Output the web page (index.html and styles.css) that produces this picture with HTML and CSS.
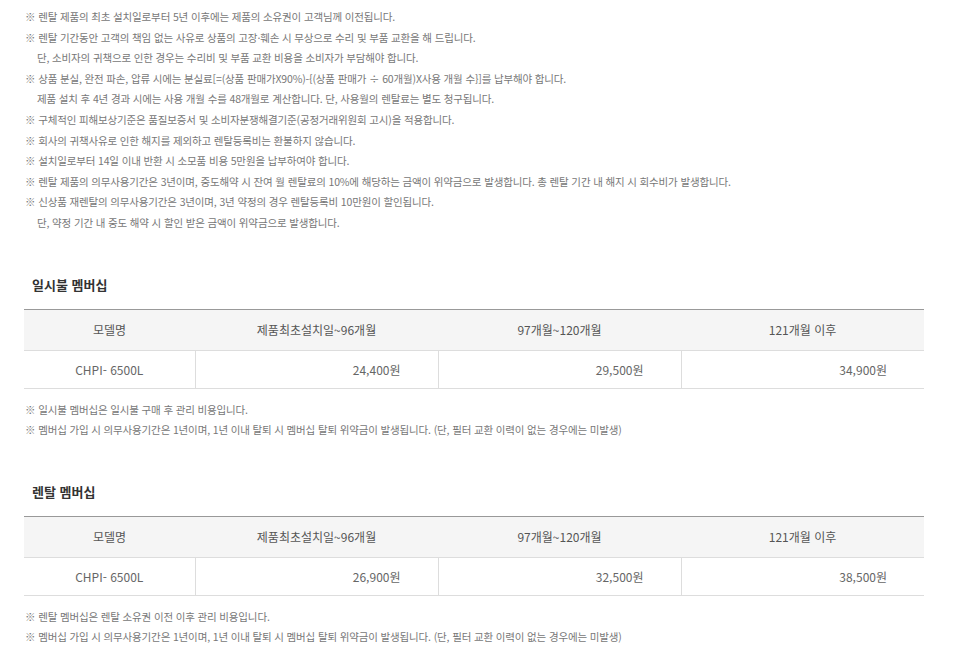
FILE: index.html
```html
<!DOCTYPE html>
<html lang="ko">
<head>
    <meta charset="UTF-8">
    <meta name="viewport" content="width=device-width, initial-scale=1.0">
    <title>렌탈 안내</title>
    <link rel="stylesheet" href="styles.css">
</head>
<body>

<div class="container">
    <ul class="notes">
        <li>※ 렌탈 제품의 최초 설치일로부터 5년 이후에는 제품의 소유권이 고객님께 이전됩니다.</li>
        <li>※ 렌탈 기간동안 고객의 책임 없는 사유로 상품의 고장·훼손 시 무상으로 수리 및 부품 교환을 해 드립니다.</li>
        <li class="sub">단, 소비자의 귀책으로 인한 경우는 수리비 및 부품 교환 비용을 소비자가 부담해야 합니다.</li>
        <li>※ 상품 분실, 완전 파손, 압류 시에는 분실료[=(상품 판매가X90%)-{(상품 판매가 ÷ 60개월)X사용 개월 수}]를 납부해야 합니다.</li>
        <li class="sub">제품 설치 후 4년 경과 시에는 사용 개월 수를 48개월로 계산합니다. 단, 사용월의 렌탈료는 별도 청구됩니다.</li>
        <li>※ 구체적인 피해보상기준은 품질보증서 및 소비자분쟁해결기준(공정거래위원회 고시)을 적용합니다.</li>
        <li>※ 회사의 귀책사유로 인한 해지를 제외하고 렌탈등록비는 환불하지 않습니다.</li>
        <li>※ 설치일로부터 14일 이내 반환 시 소모품 비용 5만원을 납부하여야 합니다.</li>
        <li>※ 렌탈 제품의 의무사용기간은 3년이며, 중도해약 시 잔여 월 렌탈료의 10%에 해당하는 금액이 위약금으로 발생합니다. 총 렌탈 기간 내 해지 시 회수비가 발생합니다.</li>
        <li>※ 신상품 재렌탈의 의무사용기간은 3년이며, 3년 약정의 경우 렌탈등록비 10만원이 할인됩니다.</li>
        <li class="sub">단, 약정 기간 내 중도 해약 시 할인 받은 금액이 위약금으로 발생합니다.</li>
    </ul>

    <!-- 일시불 멤버십 -->
    <h2 class="section-title">일시불 멤버십</h2>
    <table class="price-table">
        <colgroup>
            <col class="col-model">
            <col><col><col>
        </colgroup>
        <thead>
            <tr>
                <th>모델명</th>
                <th>제품최초설치일~96개월</th>
                <th>97개월~120개월</th>
                <th>121개월 이후</th>
            </tr>
        </thead>
        <tbody>
            <tr>
                <td class="model">CHPI- 6500L</td>
                <td class="price">24,400원</td>
                <td class="price">29,500원</td>
                <td class="price">34,900원</td>
            </tr>
        </tbody>
    </table>
    <ul class="notes after-table">
        <li>※ 일시불 멤버십은 일시불 구매 후 관리 비용입니다.</li>
        <li>※ 멤버십 가입 시 의무사용기간은 1년이며, 1년 이내 탈퇴 시 멤버십 탈퇴 위약금이 발생됩니다. (단, 필터 교환 이력이 없는 경우에는 미발생)</li>
    </ul>

    <!-- 렌탈 멤버십 -->
    <h2 class="section-title">렌탈 멤버십</h2>
    <table class="price-table">
        <colgroup>
            <col class="col-model">
            <col><col><col>
        </colgroup>
        <thead>
            <tr>
                <th>모델명</th>
                <th>제품최초설치일~96개월</th>
                <th>97개월~120개월</th>
                <th>121개월 이후</th>
            </tr>
        </thead>
        <tbody>
            <tr>
                <td class="model">CHPI- 6500L</td>
                <td class="price">26,900원</td>
                <td class="price">32,500원</td>
                <td class="price">38,500원</td>
            </tr>
        </tbody>
    </table>
    <ul class="notes after-table">
        <li>※ 렌탈 멤버십은 렌탈 소유권 이전 이후 관리 비용입니다.</li>
        <li>※ 멤버십 가입 시 의무사용기간은 1년이며, 1년 이내 탈퇴 시 멤버십 탈퇴 위약금이 발생됩니다. (단, 필터 교환 이력이 없는 경우에는 미발생)</li>
    </ul>
</div>

</body>
</html>
```

FILE: styles.css
```css
body {
    font-family: "Noto Sans CJK KR", "Noto Sans", sans-serif;
    margin: 0;
    padding: 0;
    background-color: #fff;
    color: #666;
}
.container {
    width: 900px;
    padding: 7px 0 0 24px;
}
.notes {
    list-style: none;
    margin: 0;
    padding: 0 0 0 1px;
    font-size: 10.5px;
    line-height: 20.6px;
    color: #777;
    letter-spacing: -0.15px;
}
.notes .sub {
    padding-left: 12px;
}
.notes.after-table {
    margin-top: 11px;
}
.section-title {
    margin: 41px 0 14px 8px;
    font-size: 13px;
    line-height: 20px;
    font-weight: bold;
    color: #333;
}
.price-table {
    width: 900px;
    border-collapse: collapse;
    table-layout: fixed;
    font-size: 12px;
}
.col-model {
    width: 171px;
}
.price-table th {
    height: 40px;
    padding: 0;
    background-color: #f5f5f5;
    border-top: 1px solid #999;
    border-bottom: 1px solid #ddd;
    font-weight: normal;
    color: #555;
    text-align: center;
}
.price-table td {
    height: 37px;
    padding: 0;
    border-bottom: 1px solid #ddd;
    border-left: 1px solid #ddd;
    color: #666;
}
.price-table td.model {
    border-left: none;
    text-align: center;
}
.price-table td.price {
    text-align: right;
    padding-right: 37px;
}
```
